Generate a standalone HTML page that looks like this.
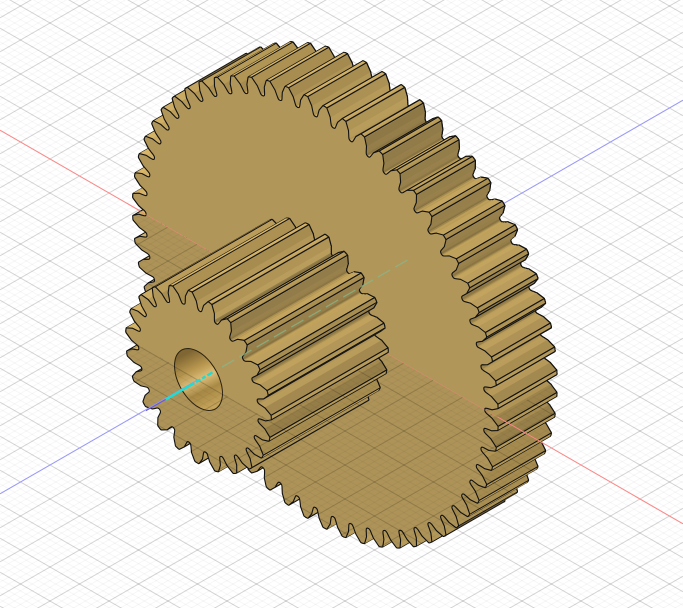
<!DOCTYPE html>
<html><head><meta charset="utf-8"><style>html,body{margin:0;padding:0;background:#fff;width:683px;height:608px;overflow:hidden}svg{display:block}</style></head>
<body><svg id="v" xmlns="http://www.w3.org/2000/svg" width="683" height="608" viewBox="0 0 683 608"></svg>
<script>
var O={x:315.4,y:312},S=Math.sqrt(3)/2;
function P(R,B,Z,c){return [c.x+S*(R+B),c.y+.5*(R-B)-Z]}
function F(a){return a[0].toFixed(1)+' '+a[1].toFixed(1)}
var T=[[-45,[184,154,88]],[-20,[192,162,96]],[10,[181,154,90]],[40,[164,138,78]],[60,[178,150,86]],[85,[206,174,102]],[110,[218,184,106]],[135,[199,166,88]]];
function shade(n,m,k){var a=Math.atan2(m,n)*180/Math.PI;if(a<-45)a=-45;if(a>135)a=135;
 for(var i=0;i<T.length-1;i++){if(a<=T[i+1][0]){var t=(a-T[i][0])/(T[i+1][0]-T[i][0]),c=T[i][1],d=T[i+1][1];
 return 'rgb('+Math.round((c[0]+(d[0]-c[0])*t)*k)+','+Math.round((c[1]+(d[1]-c[1])*t)*k)+','+Math.round((c[2]+(d[2]-c[2])*t)*k)+')'}}
 return 'rgb(199,166,88)'}
var FR=[[0,0],[.06,.015],[.1,.06],[.13,.16],[.155,.3],[.2,.555],[.385,.97],[.405,1,1],[.45,1.01],[.5,1.012],[.55,1.01],[.595,1,1],[.615,.97],[.8,.555],[.845,.3],[.87,.16],[.9,.06],[.94,.015]];
function gear(N,tip,root,c,L,ph){
 var pts=[],i,j;
 for(i=0;i<N;i++)for(j=0;j<FR.length;j++){var a=(i+FR[j][0])/N*2*Math.PI+ph,r=root+(tip-root)*FR[j][1];pts.push({R:r*Math.cos(a),Z:r*Math.sin(a),t:FR[j][2],d:FR[j][1]})}
 var n=pts.length,vis=[],items=[];
 for(i=0;i<n;i++){var p=pts[i],q=pts[(i+1)%n];var nr=q.Z-p.Z,nz=p.R-q.R;vis[i]=nr+nz>0;p.nr=nr;p.nz=nz}
 for(i=0;i<n;i++){if(!vis[i])continue;var p=pts[i],q=pts[(i+1)%n];
  var a=P(p.R,0,p.Z,c),b=P(q.R,0,q.Z,c),d=P(q.R,L,q.Z,c),e=P(p.R,L,p.Z,c);
  var pa=Math.atan2(p.Z+q.Z,p.R+q.R)*180/Math.PI,na=Math.atan2(p.nz,p.nr)*180/Math.PI,k=1;
  if(p.d<.98&&q.d<1){if(pa>-10&&pa<75&&na<pa-8)k=.8;else if(pa>-10&&pa<60&&na>pa+8)k=.9}
  var col=shade(p.nr,p.nz,k);
  var s='<path d="M'+F(a)+'L'+F(b)+'L'+F(d)+'L'+F(e)+'Z" fill="'+col+'" stroke="'+col+'" stroke-width=".6"/>';
  s+='<path d="M'+F(e)+'L'+F(d)+'" stroke="#111" stroke-width="1.2" stroke-linecap="round" fill="none"/>';
  if(p.t||!vis[(i-1+n)%n])s+='<path d="M'+F(a)+'L'+F(e)+'" stroke="#111" stroke-width="1.1" fill="none"/>';
  if(q.t||!vis[(i+1)%n])s+='<path d="M'+F(b)+'L'+F(d)+'" stroke="#111" stroke-width="1.1" fill="none"/>';
  items.push([(p.R+q.R+p.Z+q.Z),s])}
 items.sort(function(x,y){return x[0]-y[0]});
 var out=items.map(function(x){return x[1]}).join('');
 var f='M'+pts.map(function(p){return F(P(p.R,0,p.Z,c))}).join('L')+'Z';
 out+='<path d="'+f+'" fill="#b1965a" stroke="#111" stroke-width="1.1" stroke-linejoin="round"/>';
 return out}
var big=gear(60,211,195.5,O,68,0);
var C2={x:O.x-S*135,y:O.y+67.5};
var small=gear(23,84,69,C2,135,.183);
var grid='';
function ln(x1,y1,x2,y2,c,w){return '<line x1="'+x1+'" y1="'+y1.toFixed(1)+'" x2="'+x2+'" y2="'+y2.toFixed(1)+'" stroke="'+c+'" stroke-width="'+w+'"/>'}
var sl=34/59,k;
for(var pass=0;pass<2;pass++)for(k=-150;k<=150;k++){var maj=k%5==0;if((pass==1)!=maj)continue;
 var col=maj?'rgba(0,0,0,.17)':'rgba(0,0,0,.035)',w=1,y0=O.y+k*6.8;
 grid+=ln(0,y0-sl*O.x,683,y0+sl*(683-O.x),col,w)+ln(0,y0+sl*O.x,683,y0-sl*(683-O.x),col,w)}
grid+=ln(0,O.y-sl*O.x,683,O.y+sl*(683-O.x),'#f88',1)+ln(0,O.y+sl*O.x,683,O.y-sl*(683-O.x),'#99f',1);
var hx=C2.x,hy=C2.y,hr=27.7,hp='',i;
for(i=0;i<72;i++){var a=i/72*2*Math.PI;hp+=(i?'L':'M')+F(P(hr*Math.cos(a),0,hr*Math.sin(a),C2))}
hp+='Z';
var hole='<path d="'+hp+'" fill="url(#hg)" stroke="#2a2210" stroke-width="1"/>';
var h='<defs><linearGradient id="hg" gradientUnits="userSpaceOnUse" x1="'+(hx-12)+'" y1="'+(hy-26)+'" x2="'+(hx+14)+'" y2="'+(hy+26)+'">'+
 '<stop offset="0" stop-color="#7f6632"/><stop offset=".3" stop-color="#b8974f"/><stop offset=".5" stop-color="#dcbd78"/><stop offset=".72" stop-color="#a98a45"/><stop offset="1" stop-color="#c8a65c"/></linearGradient>'+
 '<g id="b">'+big+'</g><g id="s">'+small+hole+'</g>'+
 '<clipPath id="cb"><path d="M0 '+(O.y-sl*O.x)+'L'+(O.x+S*210)+' '+(O.y+105)+'L683 '+(O.y+105-sl*(683-O.x-S*210))+'L683 0L0 0Z"/></clipPath>'+
 '<clipPath id="cs"><path d="M0 '+(C2.y-sl*C2.x)+'L'+(C2.x+S*84)+' '+(C2.y+42)+'L683 '+(C2.y+42-sl*(683-C2.x-S*84))+'L683 0L0 0Z"/></clipPath></defs>';
h+='<g style="filter:brightness(.98)"><use href="#b"/><use href="#s"/></g>'+grid;
h+='<g clip-path="url(#cb)"><use href="#b"/></g><g clip-path="url(#cs)"><use href="#s"/></g>';
h+='<line x1="146" y1="410.7" x2="165.7" y2="399.4" stroke="#6a5ad0" stroke-width="1.1"/>';
h+='<line x1="165.7" y1="399.4" x2="215" y2="371" stroke="#1fdcd4" stroke-width="2.4" stroke-dasharray="33 2 5 2 4 2 6"/>';
h+='<line x1="222" y1="367" x2="411" y2="258" stroke="#86b88c" stroke-width="1.3" stroke-dasharray="14 6" opacity=".75"/>';
document.getElementById('v').innerHTML=h;
</script></body></html>
